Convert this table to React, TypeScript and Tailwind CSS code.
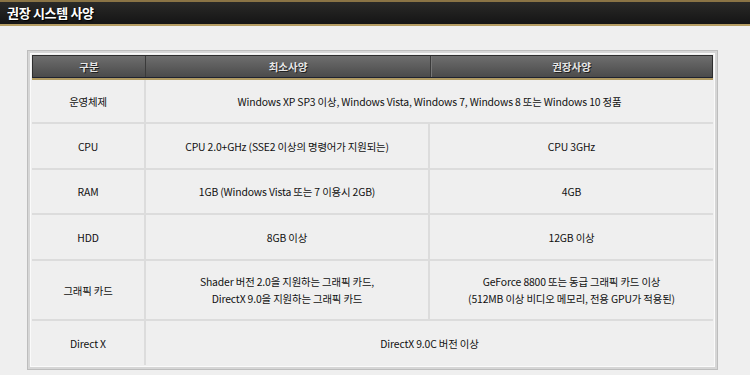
import React from 'react';

const font = { fontFamily: '"Noto Sans CJK KR", "Noto Sans", sans-serif' };

const rows: { label: string; min: React.ReactNode; rec?: React.ReactNode; h: string }[] = [
    { label: '운영체제', min: 'Windows XP SP3 이상, Windows Vista, Windows 7, Windows 8 또는 Windows 10 정품', h: 'h-[42px]' },
    { label: 'CPU', min: 'CPU 2.0+GHz (SSE2 이상의 명령어가 지원되는)', rec: 'CPU 3GHz', h: 'h-[46px]' },
    { label: 'RAM', min: '1GB (Windows Vista 또는 7 이용시 2GB)', rec: '4GB', h: 'h-[45px]' },
    { label: 'HDD', min: '8GB 이상', rec: '12GB 이상', h: 'h-[46px]' },
    {
        label: '그래픽 카드',
        min: (<>Shader 버전 2.0을 지원하는 그래픽 카드,<br />DirectX 9.0을 지원하는 그래픽 카드</>),
        rec: (<>GeForce 8800 또는 동급 그래픽 카드 이상<br />(512MB 이상 비디오 메모리, 전용 GPU가 적용된)</>),
        h: 'h-[60px]',
    },
    { label: 'Direct X', min: 'DirectX 9.0C 버전 이상', h: 'h-[46px]' },
];

export default function App() {
    return (
        <div className="w-[750px] h-[375px] bg-[#efefef] overflow-hidden" style={font}>
            <div className="h-[26px] bg-gradient-to-b from-[#2a2a28] to-[#151515] border-t-2 border-b-2 border-t-[#8a7445] border-b-[#b59d63] flex items-center px-[7px]">
                <h1 className="text-[13px] font-bold text-white tracking-tight [text-shadow:1px_1px_1px_#000]">권장 시스템 사양</h1>
            </div>
            <div className="pt-[24px] pl-[27px]">
                <div className="w-[691px] border border-[#bdbdbd] bg-[#d6d6d6] p-[2px]">
                    <div className="border border-[#fafafa] bg-[#efefef] p-[1px]">
                        <div className="flex h-[23px] bg-gradient-to-b from-[#6e6e6e] to-[#4b4b4b] border border-[#2e2e2e] border-b-[#1f2330] shadow-[0_2px_0_#b09a62] text-[10.5px] text-[#e6e6e6] [text-shadow:1px_1px_0_#222] font-semibold">
                            <div className="w-[113px] flex items-center justify-center border-r border-r-[#3a3a3a]">구분</div>
                            <div className="w-[285px] flex items-center justify-center border-r border-r-[#3a3a3a] shadow-[1px_0_0_#777]">최소사양</div>
                            <div className="flex-1 flex items-center justify-center">권장사양</div>
                        </div>
                        <div className="mt-[2px] text-[10.4px] tracking-[-0.15px] text-[#111] leading-[17px]">
                            {rows.map((r, i) => (
                                <div key={i} className={`flex ${r.h} ${i > 0 ? 'border-t-2 border-t-[#dcdcdc]' : ''}`}>
                                    <div className="w-[114px] flex items-center justify-center border-r-2 border-r-[#dcdcdc]">{r.label}</div>
                                    {r.rec === undefined ? (
                                        <div className="flex-1 flex items-center justify-center text-center">{r.min}</div>
                                    ) : (
                                        <>
                                            <div className="w-[284px] flex items-center justify-center text-center border-r-2 border-r-[#dcdcdc]">{r.min}</div>
                                            <div className="flex-1 flex items-center justify-center text-center">{r.rec}</div>
                                        </>
                                    )}
                                </div>
                            ))}
                        </div>
                    </div>
                </div>
            </div>
        </div>
    );
}
